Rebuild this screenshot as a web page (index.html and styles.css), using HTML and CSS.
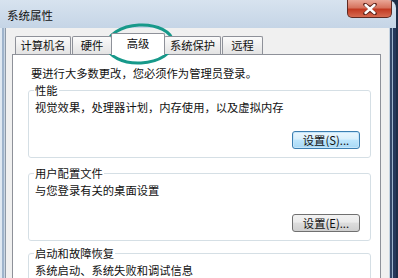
FILE: index.html
```html
<!DOCTYPE html>
<html lang="zh-CN">
  <head>
    <meta charset="UTF-8" />
    <title>系统属性</title>
    <link rel="stylesheet" href="styles.css">
  </head>
  <body>
    <div class="window">
      <div class="titlebar">
        <span class="title">系统属性</span>
        <div class="close">
          <svg width="16" height="12" viewBox="0 0 16 12">
            <path d="M3 1.5 L8 5 L13 1.5 M3 10.5 L8 7 L13 10.5" fill="none" stroke="#5a2018" stroke-width="3.6" stroke-linecap="round"/>
            <path d="M3.5 2 L12.5 10 M12.5 2 L3.5 10" fill="none" stroke="#fff" stroke-width="2.4" stroke-linecap="round"/>
          </svg>
        </div>
      </div>

      <div class="frame">
        <div class="edge-left"></div>
        <div class="client">
          <div class="tabs">
            <div class="tab tab-name">计算机名</div>
            <div class="tab tab-hw">硬件</div>
            <div class="tab active">高级</div>
            <div class="tab tab-sys">系统保护</div>
            <div class="tab tab-remote">远程</div>
          </div>

          <div class="panel">
            <p class="intro">要进行大多数更改，您必须作为管理员登录。</p>

            <fieldset class="group">
              <legend>性能</legend>
              <p class="desc">视觉效果，处理器计划，内存使用，以及虚拟内存</p>
              <div class="actions">
                <button class="btn default">设置(S)...</button>
              </div>
            </fieldset>

            <fieldset class="group">
              <legend>用户配置文件</legend>
              <p class="desc">与您登录有关的桌面设置</p>
              <div class="actions">
                <button class="btn">设置(E)...</button>
              </div>
            </fieldset>

            <fieldset class="group group-last">
              <legend>启动和故障恢复</legend>
              <p class="desc">系统启动、系统失败和调试信息</p>
            </fieldset>
          </div>
        </div>
        <div class="edge-right"></div>
      </div>
    </div>

    <!-- пометка вокруг вкладки -->
    <svg class="mark" width="76" height="46" viewBox="0 0 76 46">
      <ellipse cx="38" cy="23" rx="33" ry="19" fill="none" stroke="#17998a" stroke-width="3" transform="rotate(-3 38 23)"/>
    </svg>
  </body>
</html>
```

FILE: styles.css
```css
* {
  box-sizing: border-box;
}

body {
  margin: 0;
  width: 398px;
  height: 278px;
  overflow: hidden;
  background: #1d2d47;
  font-family: "Noto Sans CJK SC", "Liberation Sans", sans-serif;
  font-size: 11.3px;
  color: #111;
}

.window {
  width: 396px;
  height: 278px;
  display: flex;
  flex-direction: column;
  border-top-right-radius: 8px;
  background: linear-gradient(180deg, #d7e3ef 0, #c5d5e6 28px, #c5d5e6);
  overflow: hidden;
}

.titlebar {
  height: 28px;
  flex-shrink: 0;
  display: flex;
  justify-content: space-between;
  align-items: flex-start;
  padding-right: 4px;
}

.title {
  padding: 8px 0 0 7px;
  line-height: 14px;
  font-size: 11.5px;
}

.close {
  width: 45px;
  height: 18px;
  border: 1px solid #5e2a22;
  border-top: none;
  border-radius: 0 0 5px 5px;
  background: linear-gradient(180deg, #eaa797 0, #d6735e 45%, #c23a22 55%, #d66a50 100%);
  display: flex;
  align-items: center;
  justify-content: center;
}

.frame {
  flex: 1;
  display: flex;
  min-height: 0;
}

.edge-left {
  width: 6px;
  background: linear-gradient(90deg, #e0e9f2 0 2px, #9fb4cc 2px 4px, #cad7e5 4px 5px, #8e9aa8 5px 6px);
}

.edge-right {
  width: 7px;
  background: linear-gradient(90deg, #c4d2e0 0 1px, #34496a 1px 3px, #9ab1ca 3px 4px, #24375a 4px);
}

.client {
  flex: 1;
  background: #f0f0f0;
  padding: 8px 8px 0 6px;
  display: flex;
  flex-direction: column;
  min-height: 0;
}

.tabs {
  height: 18px;
  flex-shrink: 0;
  display: flex;
  align-items: flex-end;
  gap: 1px;
  padding-left: 3px;
  position: relative;
  z-index: 1;
}

.tab {
  height: 18px;
  border: 1px solid #8e9199;
  border-bottom: none;
  border-radius: 2px 2px 0 0;
  background: linear-gradient(180deg, #fbfbfb, #e3e3e3);
  line-height: 16px;
  text-align: center;
}

.tab-name {
  width: 56px;
}

.tab-hw {
  width: 40px;
}

.tab-sys {
  width: 57px;
}

.tab-remote {
  width: 41px;
}

.tab.active {
  width: 54px;
  height: 22px;
  margin: 0 -2px -1px;
  background: #fff;
  line-height: 19px;
}

.panel {
  flex: 1;
  min-height: 0;
  overflow: hidden;
  background: #fff;
  border: 1px solid #8e9199;
  border-bottom: none;
  padding: 11px 9px 0 15px;
}

.intro {
  margin: 0 0 0 3px;
  line-height: 14px;
}

.group {
  margin: 3px 0 0;
  min-width: 0;
  border: 1px solid #d5dfe5;
  border-radius: 3px;
  padding: 3px 10px 8px 6px;
}

.group + .group {
  margin-top: 8px;
}

.group + .group-last {
  margin-top: 5px;
}

.group legend {
  padding: 0 1px;
  margin-left: -1px;
  line-height: 14px;
}

.desc {
  margin: 0;
  line-height: 14px;
}

.actions {
  display: flex;
  justify-content: flex-end;
  margin-top: 17px;
}

.btn {
  width: 68px;
  height: 18px;
  padding: 0;
  border: 1px solid #707070;
  border-radius: 3px;
  font: inherit;
  line-height: 16px;
  color: #111;
  background: linear-gradient(180deg, #f2f2f2, #ebebeb 45%, #dddddd 50%, #cfcfcf);
}

.btn.default {
  border-color: #3c7fb1;
  background: linear-gradient(180deg, #eaf6fd, #d9f0fc 45%, #bee6fd 50%, #a7d9f5);
  box-shadow: inset 0 0 0 1px #c6e6fb;
}

.mark {
  position: absolute;
  left: 102px;
  top: 21px;
}
```
